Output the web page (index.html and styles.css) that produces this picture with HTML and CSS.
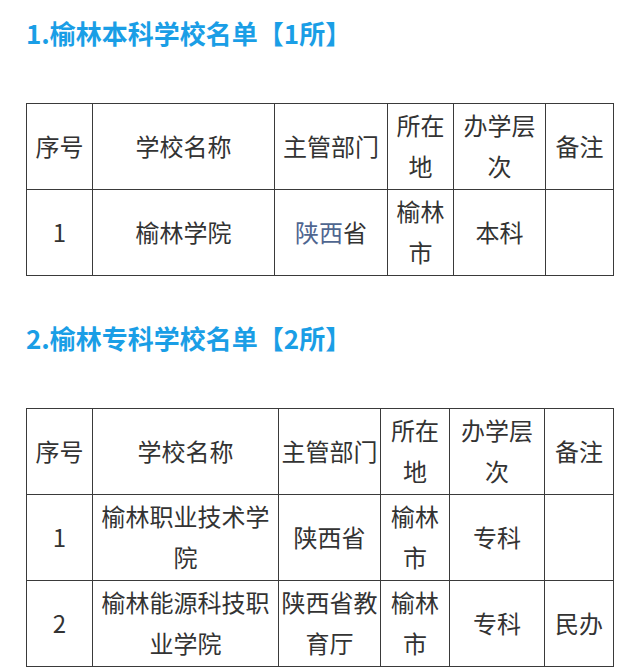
FILE: index.html
```html
<!DOCTYPE html>
<html lang="zh">
<head>
<meta charset="utf-8">
<link rel="stylesheet" href="styles.css">
</head>
<body>
<div class="page">
  <h2 class="title">1.榆林本科学校名单【1所】</h2>
  <table class="list">
    <colgroup>
      <col class="c1"><col class="c2"><col class="c3"><col class="c4"><col class="c5"><col class="c6">
    </colgroup>
    <tr><td>序号</td><td>学校名称</td><td>主管部门</td><td>所在地</td><td>办学层次</td><td>备注</td></tr>
    <tr><td>1</td><td>榆林学院</td><td><span class="link">陕西</span>省</td><td>榆林市</td><td>本科</td><td></td></tr>
  </table>

  <h2 class="title">2.榆林专科学校名单【2所】</h2>
  <table class="list list2">
    <colgroup>
      <col class="d1"><col class="d2"><col class="d3"><col class="d4"><col class="d5"><col class="d6">
    </colgroup>
    <tr><td>序号</td><td>学校名称</td><td>主管部门</td><td>所在地</td><td>办学层次</td><td>备注</td></tr>
    <tr><td>1</td><td>榆林职业技术学院</td><td>陕西省</td><td>榆林市</td><td>专科</td><td></td></tr>
    <tr><td>2</td><td>榆林能源科技职业学院</td><td>陕西省教育厅</td><td>榆林市</td><td>专科</td><td>民办</td></tr>
  </table>
</div>
</body>
</html>
```

FILE: styles.css
```css
html, body {
  margin: 0;
  padding: 0;
  background: #ffffff;
}
body {
  font-family: "Noto Sans CJK SC", "Noto Sans", sans-serif;
  color: #333333;
}
.page {
  padding: 15px 0 0 26px;
}
.title {
  margin: 0;
  font-size: 26px;
  line-height: 36px;
  font-weight: bold;
  color: #1a9ee6;
}
.list {
  margin: 52px 0 44px 0;
  border-collapse: collapse;
  table-layout: fixed;
  width: 587px;
}
.list td {
  border: 1.5px solid #3a3a3a;
  padding: 0 2px 3px 2px;
  font-size: 24px;
  line-height: 41px;
  text-align: center;
  vertical-align: middle;
  height: 84px;
  box-sizing: border-box;
}
.link {
  color: #4f6690;
}
.c1 { width: 66px; }
.c2 { width: 182px; }
.c3 { width: 113px; }
.c4 { width: 66px; }
.c5 { width: 92px; }
.c6 { width: 68px; }
.d1 { width: 66px; }
.d2 { width: 186px; }
.d3 { width: 102px; }
.d4 { width: 69px; }
.d5 { width: 95px; }
.d6 { width: 69px; }
```
